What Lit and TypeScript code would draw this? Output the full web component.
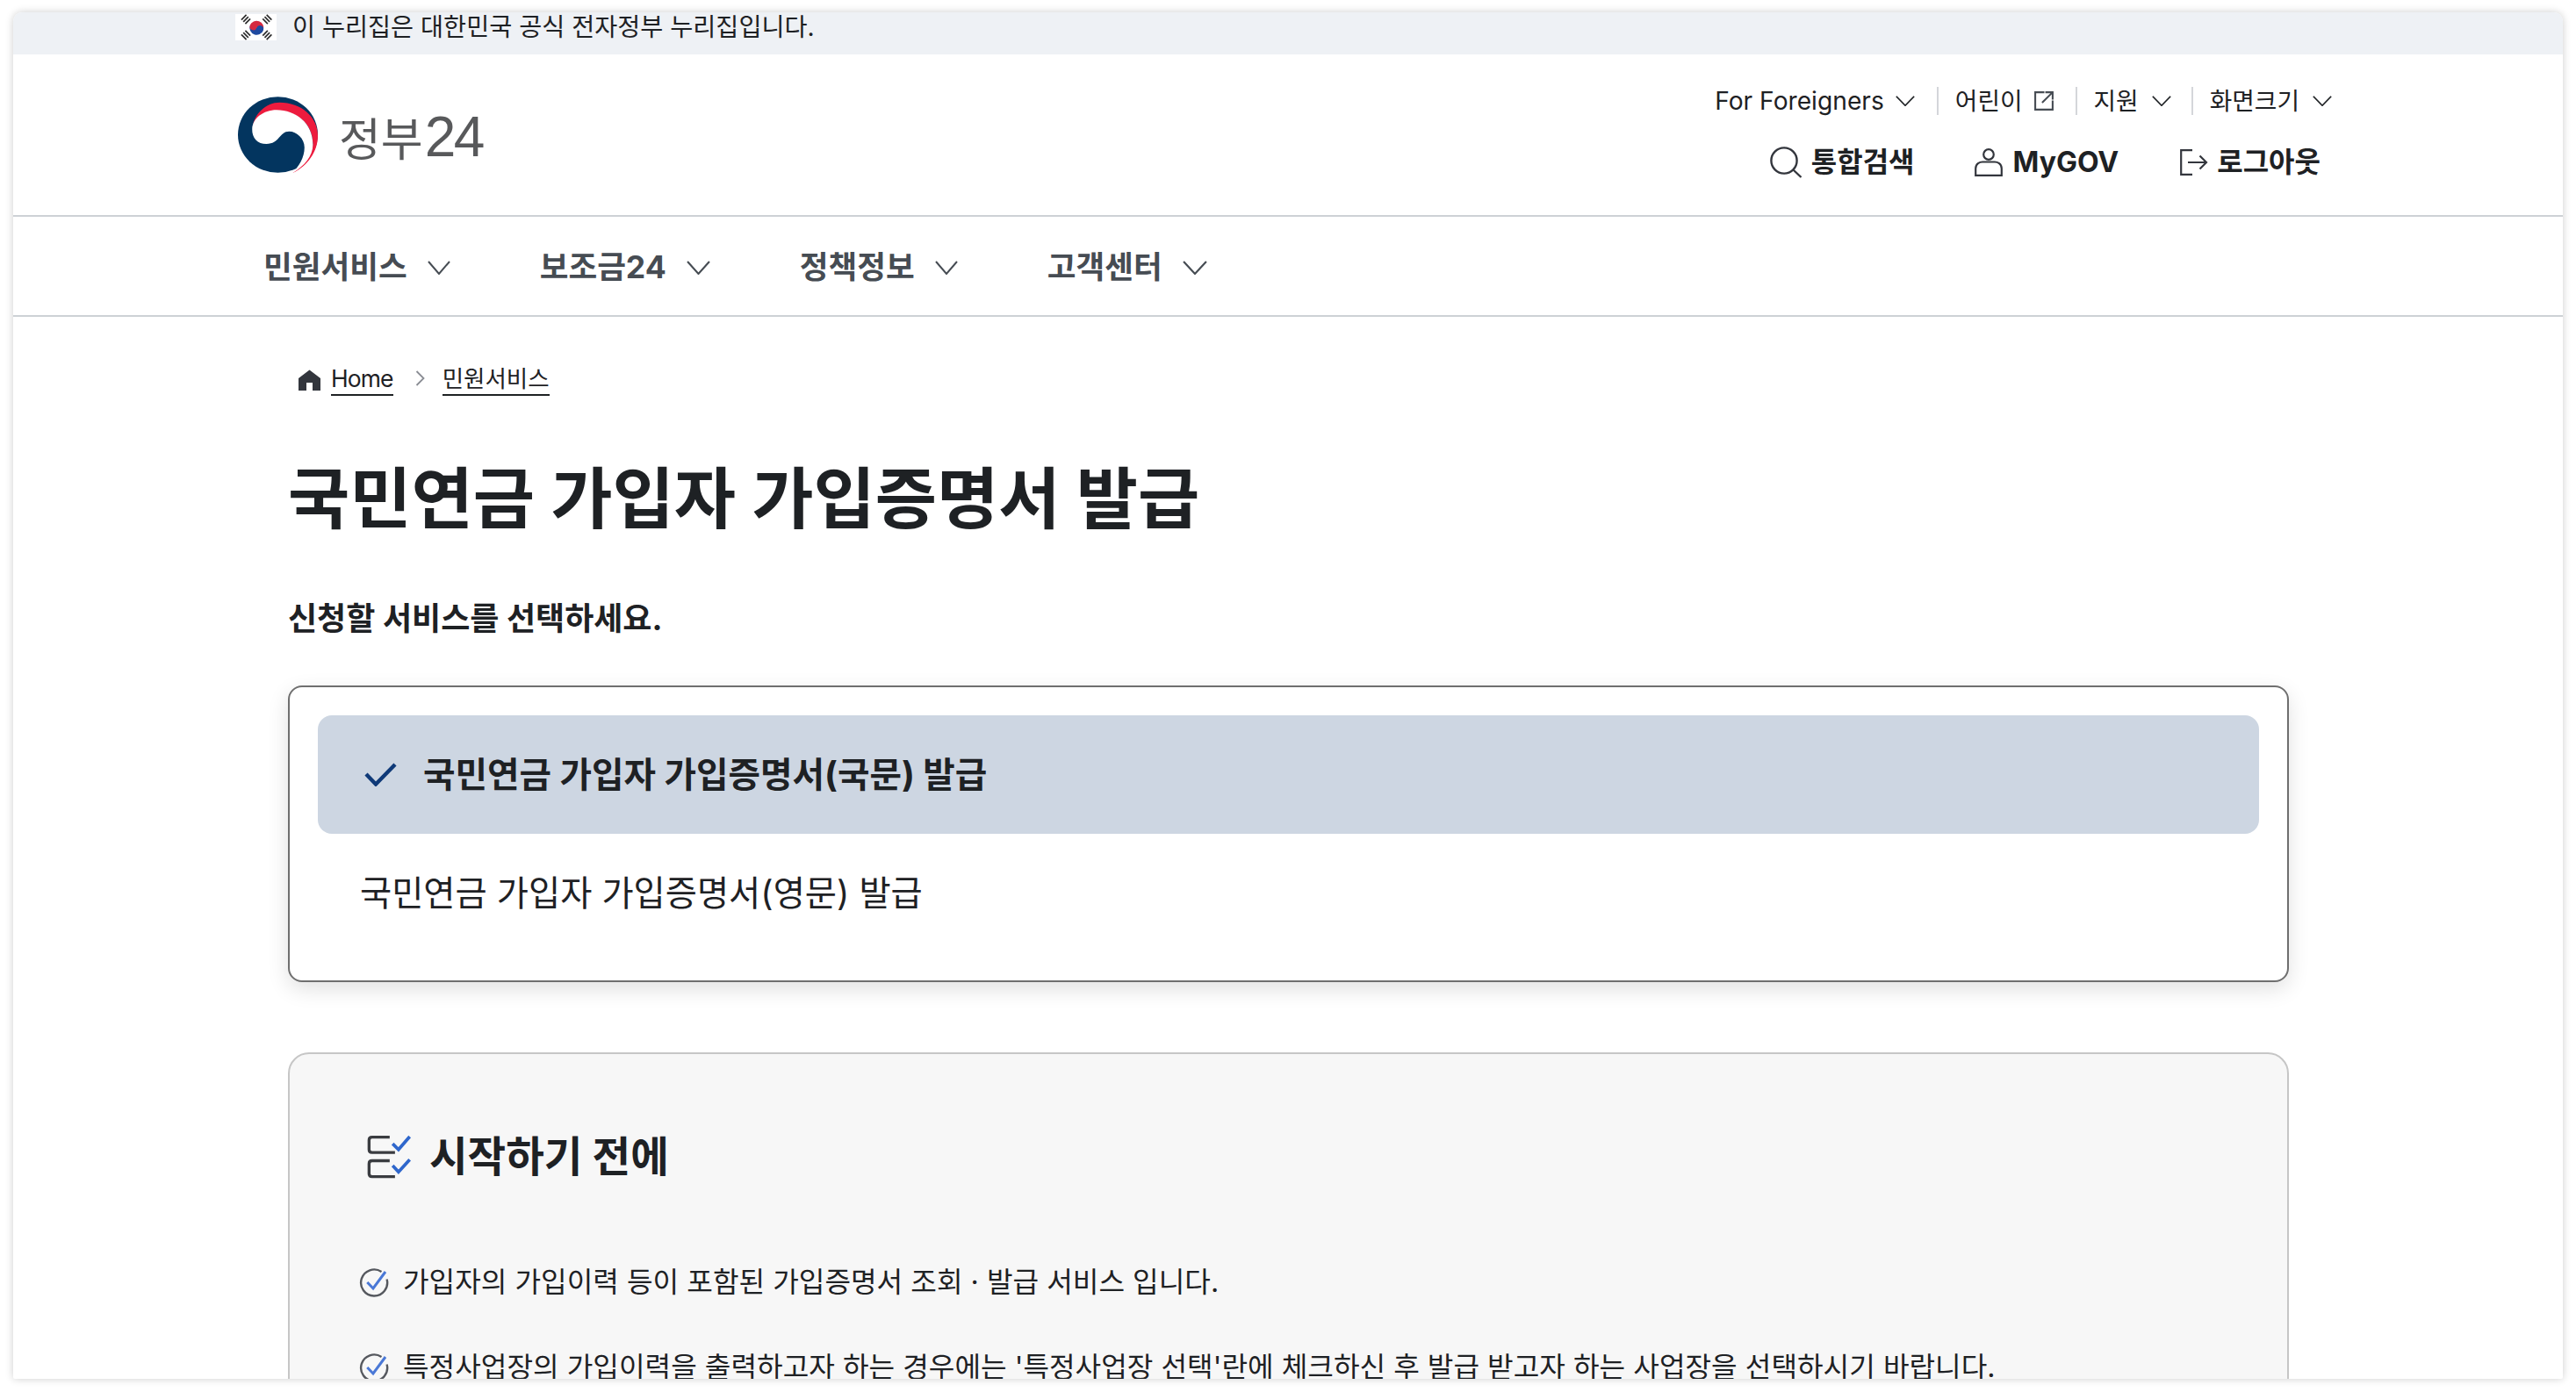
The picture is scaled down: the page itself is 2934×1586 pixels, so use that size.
import { LitElement, html, css, svg } from "lit";
import { customElement } from "lit/decorators.js";

const chevron = (w: number, h: number) => html`<svg width=${w} height=${h} viewBox="0 0 26 16" preserveAspectRatio="none" fill="none"><path d="M1 1 L13 15 L25 1" stroke="currentColor" stroke-width="2"/></svg>`;

const listCheck = html`<svg class="licon" width="34" height="34" viewBox="0 0 34 34" fill="none"><path d="M25.5 5 A15 15 0 1 0 31.6 13.5" stroke="#55585e" stroke-width="2.4"/><path d="M9.3 17 L16 24 L30 5" stroke="#4a78d6" stroke-width="3"/></svg>`;

@customElement("app-root")
export class AppRoot extends LitElement {
  static styles = css`
    :host { display: block; box-sizing: border-box; height: 1586px; padding: 14px 15px 15px; background: #fff; overflow: hidden;
      font-family: Inter, "Noto Sans CJK KR", "Noto Sans", sans-serif; color: #1e2124; }
    * { box-sizing: border-box; }
    .frame { height: 100%; overflow: hidden; background: #fff; border-radius: 10px 10px 2px 2px; box-shadow: 0 0 10px rgba(0,0,0,.2); }
    .banner { height: 48px; background: #eef1f5; padding: 2px 0 0 253px; display: flex; align-items: flex-start; gap: 18px; font-size: 28.3px; line-height: 30px; }
    .banner span { display: block; }
    .flag { display: block; flex: none; }
    .head { height: 185px; border-bottom: 2px solid #cdd1d5; display: flex; justify-content: space-between; align-items: flex-start; padding: 48px 238px 0 256px; }
    .logo { display: flex; align-items: center; gap: 24px; height: 87px; }
    .logo svg { display: block; }
    .logo-text { display: flex; align-items: baseline; padding-top: 10px; line-height: 77px; color: #58595b; font-family: "Liberation Sans", "Noto Sans CJK KR", sans-serif; }
    .logo-text b { font-weight: 400; font-size: 52px; margin-right: 2px; letter-spacing: 0; }
    .logo-text i { font-style: normal; font-size: 64px; letter-spacing: -2.5px; }
    .right { display: flex; flex-direction: column; align-items: flex-end; margin-top: -11px; }
    .util { display: flex; height: 32px; margin-bottom: 34px; }
    .util a { display: flex; align-items: center; gap: 15px; padding: 0 25px 0 19px; border-left: 2px solid #d4d6da; font-size: 27.8px; line-height: 32px; color: #1e2124; }
    .util a:first-child { border-left: 0; }
    .util a.en { font-size: 28.2px; gap: 13px; }
    .util a.kid { gap: 12px; padding-right: 24px; }
    .util a.sup { padding-right: 23px; }
    .main-links { display: flex; height: 40px; align-items: center; margin-right: 38px; font-size: 32px; font-weight: 700; line-height: 40px; }
    .main-links a { display: flex; align-items: center; gap: 10px; margin-left: 70px; color: #1e2124; }
    .main-links a.user { gap: 12px; margin-left: 68px; }
    .main-links svg { display: block; flex: none; }
    .nav { height: 114px; border-bottom: 2px solid #cdd1d5; display: flex; align-items: center; padding: 3px 0 0 285px; gap: 102px; color: #464c53; font-size: 35.6px; font-weight: 700; }
    .nav a { display: flex; align-items: center; gap: 23px; line-height: 50px; }
    .main { padding: 52px 312px 0 313px; }
    .crumb { display: flex; align-items: flex-start; height: 38px; margin-left: 12px; font-size: 26.5px; line-height: 36px; }
    .crumb a { display: block; height: 38px; border-bottom: 2px solid #1e2124; }
    .crumb a.en { letter-spacing: -0.9px; }
    .crumb .home { margin: 8px 12px 0 0; display: block; }
    .crumb .sep { margin: 9px 20px 0 25px; display: block; }
    h1 { margin: 67px 0 0; font-size: 76.4px; line-height: 100px; font-weight: 700; }
    .sub { margin: 62px 0 0; font-size: 36px; line-height: 50px; font-weight: 700; }
    .select { margin-top: 51px; height: 338px; border: 2px solid #6f6f6f; border-radius: 16px; padding: 32px 32px 32px 32px; background: #fff; box-shadow: 0 8px 24px rgba(0,0,0,.12); }
    .opt { height: 135px; display: flex; align-items: center; gap: 30px; font-size: 39.35px; line-height: 50px; padding-left: 48px; }
    .opt.on { background: #cdd6e2; border-radius: 16px; font-weight: 700; padding-left: 53px; font-size: 39.7px; }
    .opt svg { display: block; flex: none; }
    .card { margin-top: 80px; height: 700px; border: 2px solid #c6c6c6; border-radius: 24px; background: #f7f7f7; padding: 87px 86px 0 80px; }
    .card h2 { margin: 0 0 0 7px; display: flex; align-items: center; gap: 20px; font-size: 47.4px; line-height: 60px; font-weight: 700; }
    .card h2 svg { display: block; flex: none; }
    ul { list-style: none; margin: 91px 0 0; padding: 0; display: flex; flex-direction: column; gap: 53px; }
    li { display: flex; align-items: center; gap: 16px; height: 44px; font-size: 32.2px; line-height: 44px; white-space: nowrap; }
    .licon { display: block; flex: none; margin-left: -1px; }
  `;

  render() {
    return html`<div class="frame">
      <div class="banner">
        <svg class="flag" width="47" height="30" viewBox="0 0 47 30">
          <rect width="47" height="30" fill="#fff"/>
          <g transform="rotate(20 24.3 15.7)">
            <path d="M16.3 15.7 A8 8 0 0 1 32.3 15.7 Z" fill="#d5283f"/>
            <path d="M16.3 15.7 A8 8 0 0 0 32.3 15.7 Z" fill="#1f4aa0"/>
            <circle cx="20.3" cy="15.7" r="4" fill="#d5283f"/>
            <circle cx="28.3" cy="15.7" r="4" fill="#1f4aa0"/>
          </g>
          ${[[12,6,-45],[36.3,6,45],[12,24,45],[36.3,24,-45]].map(([x,y,a]) => svg`<g transform="translate(${x} ${y}) rotate(${a})" fill="#2e2e2e"><rect x="-4" y="-4" width="8" height="1.7"/><rect x="-4" y="-0.85" width="8" height="1.7"/><rect x="-4" y="2.3" width="8" height="1.7"/></g>`)}
        </svg>
        <span>이 누리집은 대한민국 공식 전자정부 누리집입니다.</span>
      </div>

      <div class="head">
        <div class="logo">
          <svg width="91" height="87" viewBox="62 60 275 262">
            <ellipse cx="199.5" cy="191" rx="137.5" ry="131" fill="#03355f"/>
            <path d="M250 323 C300 300 337 250 337 195 L345 195 L345 330 L250 330 Z" fill="#fff"/>
            <path d="M112 170 C115 120 160 80 205 80 C280 80 337 130 337 195 C337 250 300 300 250 323 C290 295 320 260 320 222 C320 150 260 108 195 108 C150 108 115 135 112 170 Z" fill="#ed1b3e"/>
            <path d="M111 172 C112 135 150 106 195 106 C260 106 320 150 320 225 C320 265 290 300 250 322 C272 300 291 270 291 235 C291 205 265 180 238 180 C205 180 205 223 160 223 C130 223 110 202 111 172 Z" fill="#fff"/>
          </svg>
          <span class="logo-text"><b>정부</b><i>24</i></span>
        </div>
        <div class="right">
          <div class="util">
            <a class="en">For Foreigners ${chevron(22, 12)}</a>
            <a class="kid">어린이 <svg width="24" height="24" viewBox="0 0 23 23" fill="none" stroke="#464c53" stroke-width="2"><path d="M12 2 H2 V21 H21 V11"/><path d="M9.5 13.5 L20 3 M13 2 H21 V10"/></svg></a>
            <a class="sup">지원 ${chevron(22, 12)}</a>
            <a>화면크기 ${chevron(22, 12)}</a>
          </div>
          <div class="main-links">
            <a><svg width="37" height="36" viewBox="0 0 37 36" fill="none" stroke="#33363d" stroke-width="2.4"><circle cx="16" cy="16" r="14.6"/><path d="M26.5 26.5 L35.5 35"/></svg>통합검색</a>
            <a class="user"><svg width="32" height="32" viewBox="0 0 32 32" fill="none" stroke="#33363d" stroke-width="2.2"><circle cx="16" cy="7" r="5.8"/><path d="M1.2 30.8 V23 C1.2 17.5 6 15.5 9 15.5 H23 C26 15.5 30.8 17.5 30.8 23 V30.8 Z"/></svg>MyGOV</a>
            <a><svg width="32" height="30" viewBox="0 0 32 30" fill="none" stroke="#33363d" stroke-width="2.2"><path d="M14 1.2 H1.2 V28.8 H14"/><path d="M9 15 H30 M22.5 7.5 L30 15 L22.5 22.5"/></svg>로그아웃</a>
          </div>
        </div>
      </div>

      <div class="nav">
        <a>민원서비스 ${chevron(26, 16)}</a>
        <a>보조금24 ${chevron(27, 16)}</a>
        <a>정책정보 ${chevron(26, 16)}</a>
        <a>고객센터 ${chevron(28, 16)}</a>
      </div>

      <div class="main">
        <div class="crumb">
          <svg class="home" width="25" height="24" viewBox="0 0 25 24"><path fill="#33363d" d="M12.5 0.5 L25 10 V24 H16 V15 H9 V24 H0 V10 Z"/></svg>
          <a class="en">Home</a>
          <svg class="sep" width="11" height="18" viewBox="0 0 11 18" fill="none"><path d="M1.5 1 L9.5 9 L1.5 17" stroke="#8a8d94" stroke-width="1.8"/></svg>
          <a>민원서비스</a>
        </div>
        <h1>국민연금 가입자 가입증명서 발급</h1>
        <p class="sub">신청할 서비스를 선택하세요.</p>
        <div class="select">
          <div class="opt on">
            <svg width="37" height="27" viewBox="0 0 37 27" fill="none"><path d="M2 13 L13 24.5 L35 2" stroke="#0f3a78" stroke-width="4.4"/></svg>
            <span>국민연금 가입자 가입증명서(국문) 발급</span>
          </div>
          <div class="opt"><span>국민연금 가입자 가입증명서(영문) 발급</span></div>
        </div>
        <div class="card">
          <h2>
            <svg width="52" height="52" viewBox="80 65 155 155" fill="none">
              <path d="M160 76 H100 Q90 76 90 86 V118 Q90 128 100 128 H178" stroke="#3a3c40" stroke-width="10"/>
              <path d="M160 156 H100 Q90 156 90 166 V200 Q90 210 100 210 H178" stroke="#3a3c40" stroke-width="10"/>
              <path d="M170 98 L190 118 L228 74" stroke="#2f67cc" stroke-width="11"/>
              <path d="M170 172 L190 194 L228 152" stroke="#2f67cc" stroke-width="11"/>
            </svg>
            시작하기 전에
          </h2>
          <ul>
            <li>${listCheck}<span>가입자의 가입이력 등이 포함된 가입증명서 조회 · 발급 서비스 입니다.</span></li>
            <li>${listCheck}<span>특정사업장의 가입이력을 출력하고자 하는 경우에는 '특정사업장 선택'란에 체크하신 후 발급 받고자 하는 사업장을 선택하시기 바랍니다.</span></li>
          </ul>
        </div>
      </div>
    </div>`;
  }
}
